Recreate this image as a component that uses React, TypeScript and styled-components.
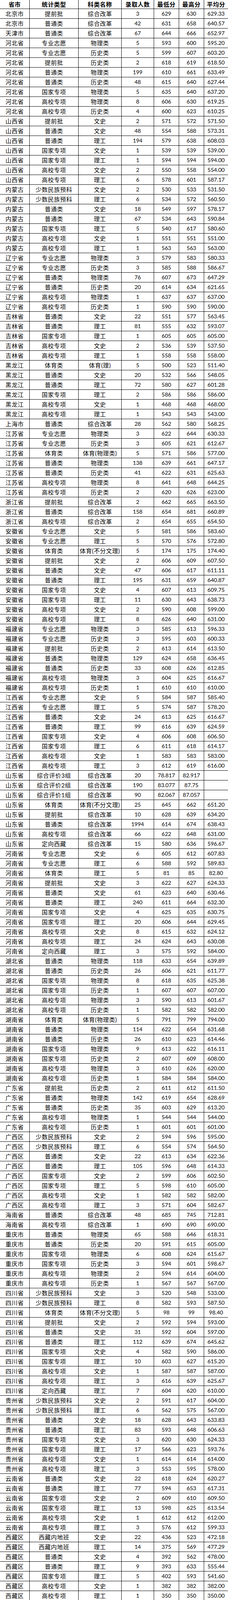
import React from "react";
import styled, { createGlobalStyle } from "styled-components";

const GlobalStyle = createGlobalStyle`
  html, body {
    margin: 0;
    padding: 0;
    background: #ffffff;
  }
  body {
    font-family: "Lato", "Noto Sans CJK SC", sans-serif;
    color: #000000;
  }
`;

const COLS = "76px 125px 110px 83px 64px 64px 61px";

const Sheet = styled.div`
  width: 583px;
  display: flex;
  flex-direction: column;
  background: #ffffff;
`;

const HeaderRow = styled.div`
  flex: 0 0 23px;
  display: grid;
  grid-template-columns: ${COLS};
  grid-template-rows: 100%;
  height: 23px;
  box-sizing: border-box;
  border-bottom: 1px solid #000;
  overflow: hidden;
`;

const Row = styled.div`
  flex: 0 0 25px;
  display: grid;
  grid-template-columns: ${COLS};
  grid-template-rows: 100%;
  height: 25px;
  box-sizing: border-box;
  border-bottom: 1px solid #000;
  overflow: hidden;
`;

const HeadCell = styled.div<{ $last?: boolean }>`
  display: flex;
  align-items: center;
  justify-content: center;
  box-sizing: border-box;
  border-right: ${(p) => (p.$last ? "none" : "1px solid #000")};
  font-family: "Noto Sans CJK SC", sans-serif;
  font-weight: 700;
  font-size: 15px;
  line-height: 16px;
  letter-spacing: 0.6px;
  white-space: nowrap;
  overflow: hidden;
`;

const Cell = styled.div<{ $last?: boolean; $num?: boolean }>`
  display: flex;
  align-items: center;
  justify-content: center;
  box-sizing: border-box;
  border-right: ${(p) => (p.$last ? "none" : "1px solid #000")};
  font-family: "Lato", "Noto Sans CJK SC", sans-serif;
  font-size: ${(p) => (p.$num ? "14px" : "15px")};
  line-height: 16px;
  letter-spacing: ${(p) => (p.$num ? "0" : "0.6px")};
  white-space: nowrap;
  overflow: hidden;
`;

const HEAD = ["省市", "统计类型", "科类名称", "录取人数", "最低分", "最高分", "平均分"];

const RAW = `北京市,提前批,综合改革,3,629,630,629.33
北京市,普通类,综合改革,42,631,658,640.57
天津市,普通类,综合改革,67,644,666,652.97
河北省,专业志愿,物理类,5,593,600,595.20
河北省,专业志愿,历史类,5,599,607,603.20
河北省,提前批,历史类,2,618,619,618.50
河北省,普通类,物理类,199,610,661,633.49
河北省,普通类,历史类,48,615,640,627.44
河北省,国家专项,物理类,5,635,640,637.20
河北省,高校专项,物理类,8,606,630,619.25
河北省,高校专项,历史类,4,600,623,610.25
山西省,提前批,文史,2,571,572,571.50
山西省,普通类,文史,48,554,588,573.31
山西省,普通类,理工,194,579,638,608.03
山西省,国家专项,文史,1,539,539,539.00
山西省,国家专项,理工,1,594,594,594.00
山西省,高校专项,文史,2,550,558,554.00
山西省,高校专项,理工,6,578,601,587.17
内蒙古,少数民族预科,文史,2,530,533,531.50
内蒙古,少数民族预科,理工,6,534,572,560.50
内蒙古,普通类,文史,18,549,597,578.17
内蒙古,普通类,理工,67,534,643,590.84
内蒙古,国家专项,理工,5,540,617,580.60
内蒙古,高校专项,文史,1,551,551,551.00
内蒙古,高校专项,理工,1,563,563,563.00
辽宁省,专业志愿,物理类,3,579,583,580.33
辽宁省,专业志愿,历史类,3,585,588,586.67
辽宁省,普通类,物理类,76,607,673,647.29
辽宁省,普通类,历史类,20,614,634,621.65
辽宁省,高校专项,物理类,1,637,637,637.00
辽宁省,高校专项,历史类,1,590,590,590.00
吉林省,普通类,文史,22,551,577,563.45
吉林省,普通类,理工,81,555,632,593.07
吉林省,国家专项,理工,1,605,605,605.00
吉林省,高校专项,文史,2,536,539,537.50
吉林省,高校专项,理工,1,558,558,558.00
黑龙江,体育类,体育(理),5,500,523,511.40
黑龙江,普通类,文史,20,532,566,548.05
黑龙江,普通类,理工,72,580,627,601.28
黑龙江,国家专项,理工,2,586,586,586.00
黑龙江,高校专项,文史,1,468,468,468.00
黑龙江,高校专项,理工,1,543,543,543.00
上海市,普通类,综合改革,28,562,580,568.25
江苏省,专业志愿,物理类,3,622,644,630.33
江苏省,专业志愿,历史类,3,605,621,612.67
江苏省,体育类,体育(物理类),5,571,586,577.00
江苏省,普通类,物理类,138,639,661,647.17
江苏省,普通类,历史类,41,622,631,625.63
江苏省,高校专项,物理类,8,641,648,644.25
江苏省,高校专项,历史类,2,620,626,623.00
浙江省,提前批,综合改革,2,662,665,663.50
浙江省,普通类,综合改革,158,654,681,660.89
浙江省,高校专项,综合改革,2,654,655,654.50
安徽省,专业志愿,文史,5,581,586,583.60
安徽省,专业志愿,理工,5,570,576,572.80
安徽省,体育类,体育(不分文理),5,174,175,174.40
安徽省,提前批,文史,2,606,609,607.50
安徽省,普通类,文史,47,606,617,611.11
安徽省,普通类,理工,195,631,659,640.87
安徽省,国家专项,文史,4,607,613,609.75
安徽省,国家专项,理工,11,630,643,638.73
安徽省,高校专项,文史,2,590,608,599.00
安徽省,高校专项,理工,8,626,640,631.00
福建省,专业志愿,物理类,3,585,613,596.33
福建省,专业志愿,历史类,3,595,603,600.33
福建省,提前批,历史类,2,613,614,613.50
福建省,普通类,物理类,129,624,658,636.45
福建省,普通类,历史类,33,608,626,612.85
福建省,高校专项,物理类,3,604,625,616.67
福建省,高校专项,历史类,1,610,610,610.00
江西省,专业志愿,文史,5,584,587,585.40
江西省,专业志愿,理工,5,574,587,578.20
江西省,普通类,文史,24,613,625,616.67
江西省,普通类,理工,99,616,639,624.59
江西省,国家专项,文史,4,606,608,606.50
江西省,国家专项,理工,6,611,618,614.17
江西省,高校专项,文史,1,583,583,583.00
江西省,高校专项,理工,3,612,619,616.00
山东省,综合评价3组,综合改革,20,78.817,82.917,
山东省,综合评价2组,综合改革,190,83.077,87.75,
山东省,综合评价1组,综合改革,90,82.067,87.057,
山东省,体育类,体育(不分文理),25,645,662,651.20
山东省,提前批,综合改革,10,628,639,634.20
山东省,普通类,综合改革,1994,614,674,638.43
山东省,高校专项,综合改革,66,622,648,631.00
山东省,定向西藏,综合改革,15,580,636,596.67
河南省,专业志愿,文史,6,605,612,607.83
河南省,专业志愿,理工,6,588,592,589.83
河南省,体育类,理工,5,81,85,82.80
河南省,提前批,文史,3,622,627,624.33
河南省,普通类,文史,61,623,640,630.46
河南省,普通类,理工,240,611,664,632.30
河南省,国家专项,文史,4,625,635,630.75
河南省,国家专项,理工,20,606,644,629.45
河南省,高校专项,文史,8,615,632,624.12
河南省,高校专项,理工,24,624,643,630.08
河南省,定向西藏,理工,3,575,592,584.00
湖北省,普通类,物理类,118,633,654,639.89
湖北省,普通类,历史类,26,606,621,611.77
湖北省,国家专项,物理类,8,618,635,625.38
湖北省,国家专项,历史类,1,607,607,607.00
湖北省,高校专项,物理类,3,590,613,601.67
湖北省,高校专项,历史类,1,582,582,582.00
湖南省,体育类,体育(物理类),5,791,799,794.00
湖南省,普通类,物理类,114,622,654,631.68
湖南省,普通类,历史类,26,610,623,614.46
湖南省,国家专项,物理类,9,613,622,616.11
湖南省,国家专项,历史类,2,607,609,608.00
湖南省,高校专项,物理类,3,610,626,620.00
湖南省,高校专项,历史类,1,584,584,584.00
广东省,提前批,历史类,2,611,612,611.50
广东省,普通类,物理类,142,619,654,628.69
广东省,普通类,历史类,35,603,629,613.20
广东省,高校专项,物理类,1,544,544,544.00
广东省,高校专项,历史类,1,601,601,601.00
广西区,少数民族预科,文史,2,594,596,595.00
广西区,少数民族预科,理工,6,554,574,564.50
广西区,普通类,文史,22,613,634,622.36
广西区,普通类,理工,105,596,648,614.33
广西区,国家专项,文史,2,599,606,602.50
广西区,国家专项,理工,5,598,610,605.00
广西区,高校专项,文史,1,582,582,582.00
广西区,高校专项,理工,3,571,604,582.67
海南省,普通类,综合改革,48,685,745,712.81
海南省,高校专项,综合改革,1,690,690,690.00
重庆市,普通类,物理类,65,588,646,618.31
重庆市,普通类,历史类,20,591,615,605.00
重庆市,国家专项,物理类,6,608,624,615.67
重庆市,国家专项,历史类,3,594,601,598.67
重庆市,高校专项,物理类,2,594,614,604.00
重庆市,高校专项,历史类,1,567,567,567.00
四川省,少数民族预科,文史,3,520,548,533.00
四川省,少数民族预科,理工,8,582,593,587.50
四川省,体育类,体育(不分文理),5,98,99,98.40
四川省,提前批,文史,2,592,594,593.00
四川省,普通类,文史,31,592,604,597.00
四川省,普通类,理工,112,639,674,645.62
四川省,国家专项,文史,4,582,590,586.00
四川省,国家专项,理工,10,603,627,615.20
四川省,高校专项,文史,1,587,587,587.00
四川省,高校专项,理工,3,616,639,625.67
四川省,定向西藏,理工,7,604,620,610.00
贵州省,少数民族预科,文史,2,591,617,604.00
贵州省,少数民族预科,理工,6,562,575,567.00
贵州省,普通类,文史,18,628,643,633.83
贵州省,普通类,理工,83,593,648,606.63
贵州省,国家专项,文史,3,620,630,624.33
贵州省,国家专项,理工,17,566,623,593.76
贵州省,高校专项,文史,1,614,614,614.00
贵州省,高校专项,理工,3,553,595,578.00
云南省,普通类,文史,22,618,624,620.27
云南省,普通类,理工,77,594,653,617.31
云南省,国家专项,文史,2,609,610,609.50
云南省,国家专项,理工,13,598,625,613.54
云南省,高校专项,文史,1,612,612,612.00
云南省,高校专项,理工,3,576,612,599.33
西藏区,西藏内地班,文史,22,436,523,472.18
西藏区,西藏内地班,理工,14,375,569,477.29
西藏区,普通类,文史,4,392,562,478.00
西藏区,普通类,理工,9,393,633,555.44
西藏区,国家专项,理工,5,402,593,541.60
西藏区,高校专项,文史,1,382,382,382.00
西藏区,高校专项,理工,1,350,350,350.00
陕西省,普通类,文史,22,603,621,607.91
陕西省,普通类,理工,94,581,639,598.21
陕西省,国家专项,文史,3,588,598,594.67
陕西省,国家专项,理工,10,566,599,589.00
陕西省,高校专项,文史,1,556,556,556.00
陕西省,高校专项,理工,2,491,546,518.50
甘肃省,少数民族预科,文史,3,549,558,554.67
甘肃省,少数民族预科,理工,7,518,546,526.71
甘肃省,普通类,文史,25,578,594,585.24
甘肃省,普通类,理工,109,565,601,576.12
甘肃省,国家专项,文史,4,572,576,573.75
甘肃省,国家专项,理工,17,539,605,559.82
甘肃省,高校专项,文史,1,569,569,569.00
甘肃省,高校专项,理工,3,519,560,545.33
青海省,少数民族预科,文史,2,491,507,499.00
青海省,少数民族预科,理工,6,439,492,470.17
青海省,普通类,文史,19,492,553,515.68
青海省,普通类,理工,47,493,543,512.15
青海省,国家专项,文史,1,511,511,511.00
青海省,国家专项,理工,1,478,478,478.00
青海省,高校专项,文史,1,517,517,517.00
青海省,高校专项,理工,3,443,449,446.00
宁夏区,少数民族预科,文史,2,525,539,532.00
宁夏区,少数民族预科,理工,6,486,514,502.00
宁夏区,普通类,文史,15,569,598,581.93
宁夏区,普通类,理工,55,524,565,541.60
宁夏区,国家专项,文史,1,548,548,548.00
宁夏区,国家专项,理工,2,464,479,471.50
宁夏区,高校专项,文史,1,569,569,569.00
宁夏区,高校专项,理工,1,423,423,423.00
新疆区,协作计划,文史,16,480,514,491.38
新疆区,协作计划,理工,44,439,501,452.86
新疆区,新疆内地班,文史,7,533,564,543.86
新疆区,新疆内地班,理工,24,549,596,570.50
新疆区,普通类,文史,18,556,577,562.39
新疆区,普通类,理工,54,551,586,567.46
新疆区,南疆计划,理工,2,512,520,516.00
新疆区,国家专项,文史,1,553,553,553.00
新疆区,国家专项,理工,6,473,548,513.00
新疆区,高校专项,文史,1,540,540,540.00
新疆区,高校专项,理工,2,511,514,512.50
港澳台,港澳台-联招,文史,24,541,588,564.20
港澳台,港澳台-联招,理工,26,567,594,573.30`;

const ROWS: string[][] = RAW.split("\n").map((line) => line.split(","));

export default function App() {
  return (
    <>
      <GlobalStyle />
      <Sheet>
        <HeaderRow>
          {HEAD.map((h, i) => (
            <HeadCell key={h} $last={i === HEAD.length - 1}>
              {h}
            </HeadCell>
          ))}
        </HeaderRow>
        {ROWS.map((r, ri) => (
          <Row key={ri}>
            {r.map((c, ci) => (
              <Cell key={ci} $num={ci >= 3} $last={ci === r.length - 1}>
                {c}
              </Cell>
            ))}
          </Row>
        ))}
      </Sheet>
    </>
  );
}
